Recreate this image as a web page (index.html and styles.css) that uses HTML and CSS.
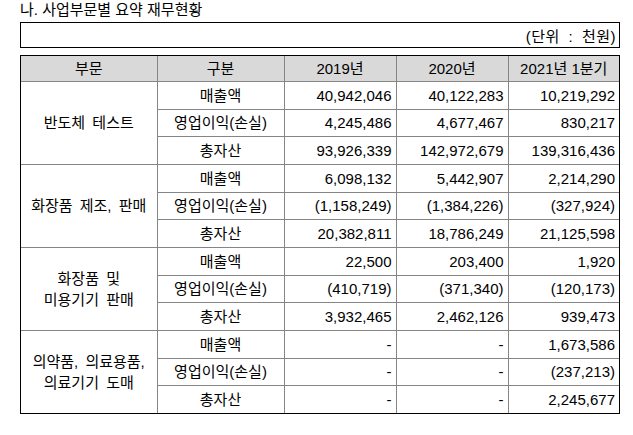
FILE: index.html
```html
<!DOCTYPE html>
<html lang="ko">
<head>
<meta charset="utf-8">
<title>사업부문별 요약 재무현황</title>
<link rel="stylesheet" href="styles.css">
</head>
<body>
<div class="page">
  <h1 class="title">나. 사업부문별 요약 재무현황</h1>
  <div class="unit">(단위 : 천원)</div>
  <div class="table-wrap">
    <table class="fin">
      <colgroup>
        <col class="c1"><col class="c2"><col class="c3"><col class="c4"><col class="c5">
      </colgroup>
      <thead>
        <tr><th>부문</th><th>구분</th><th>2019년</th><th>2020년</th><th>2021년 1분기</th></tr>
      </thead>
      <tbody>
        <tr><td class="seg" rowspan="3">반도체 테스트</td><td class="cat">매출액</td><td class="num">40,942,046</td><td class="num">40,122,283</td><td class="num">10,219,292</td></tr>
        <tr><td class="cat">영업이익(손실)</td><td class="num">4,245,486</td><td class="num">4,677,467</td><td class="num">830,217</td></tr>
        <tr><td class="cat">총자산</td><td class="num">93,926,339</td><td class="num">142,972,679</td><td class="num">139,316,436</td></tr>

        <tr><td class="seg" rowspan="3">화장품 제조, 판매</td><td class="cat">매출액</td><td class="num">6,098,132</td><td class="num">5,442,907</td><td class="num">2,214,290</td></tr>
        <tr><td class="cat">영업이익(손실)</td><td class="num">(1,158,249)</td><td class="num">(1,384,226)</td><td class="num">(327,924)</td></tr>
        <tr><td class="cat">총자산</td><td class="num">20,382,811</td><td class="num">18,786,249</td><td class="num">21,125,598</td></tr>

        <tr><td class="seg" rowspan="3">화장품 및<br>미용기기 판매</td><td class="cat">매출액</td><td class="num">22,500</td><td class="num">203,400</td><td class="num">1,920</td></tr>
        <tr><td class="cat">영업이익(손실)</td><td class="num">(410,719)</td><td class="num">(371,340)</td><td class="num">(120,173)</td></tr>
        <tr><td class="cat">총자산</td><td class="num">3,932,465</td><td class="num">2,462,126</td><td class="num">939,473</td></tr>

        <tr><td class="seg" rowspan="3">의약품, 의료용품,<br>의료기기 도매</td><td class="cat">매출액</td><td class="num">-</td><td class="num">-</td><td class="num">1,673,586</td></tr>
        <tr><td class="cat">영업이익(손실)</td><td class="num">-</td><td class="num">-</td><td class="num">(237,213)</td></tr>
        <tr><td class="cat">총자산</td><td class="num">-</td><td class="num">-</td><td class="num">2,245,677</td></tr>
      </tbody>
    </table>
  </div>
</div>
</body>
</html>
```

FILE: styles.css
```css
html, body {
  margin: 0;
  padding: 0;
  background: #ffffff;
}

body {
  font-family: "Liberation Sans", "Noto Sans CJK KR", sans-serif;
  font-size: 15px;
  color: #000000;
}

.page {
  padding: 0 13px 0 20px;
}

.title {
  margin: 0;
  font-size: 15px;
  font-weight: normal;
  line-height: 20px;
  height: 22px;
}

.unit {
  box-sizing: border-box;
  width: 600px;
  height: 26px;
  border: 1px solid #000;
  text-align: right;
  padding: 4px 3px 0 0;
  line-height: 20px;
  word-spacing: 4px;
  letter-spacing: 0.5px;
}

.table-wrap {
  box-sizing: border-box;
  width: 600px;
  margin-top: 7px;
  border: 1px solid #000;
}

.fin {
  width: 598px;
  border-collapse: collapse;
  border-style: hidden;
  table-layout: fixed;
}

.c1 { width: 136px; }
.c2 { width: 127px; }
.c3 { width: 112px; }
.c4 { width: 112px; }
.c5 { width: 111px; }

.fin th,
.fin td {
  border: 1px solid #858585;
  padding: 0 4px;
  white-space: nowrap;
  line-height: 21px;
}

.fin th {
  background: #d9d9d9;
  font-weight: normal;
  height: 25px;
  text-align: center;
}

.fin tbody tr {
  height: 27.67px;
}

.seg {
  text-align: center;
  line-height: 22px;
  word-spacing: 3px;
}

.cat {
  text-align: center;
}

.num {
  text-align: right;
}
```
